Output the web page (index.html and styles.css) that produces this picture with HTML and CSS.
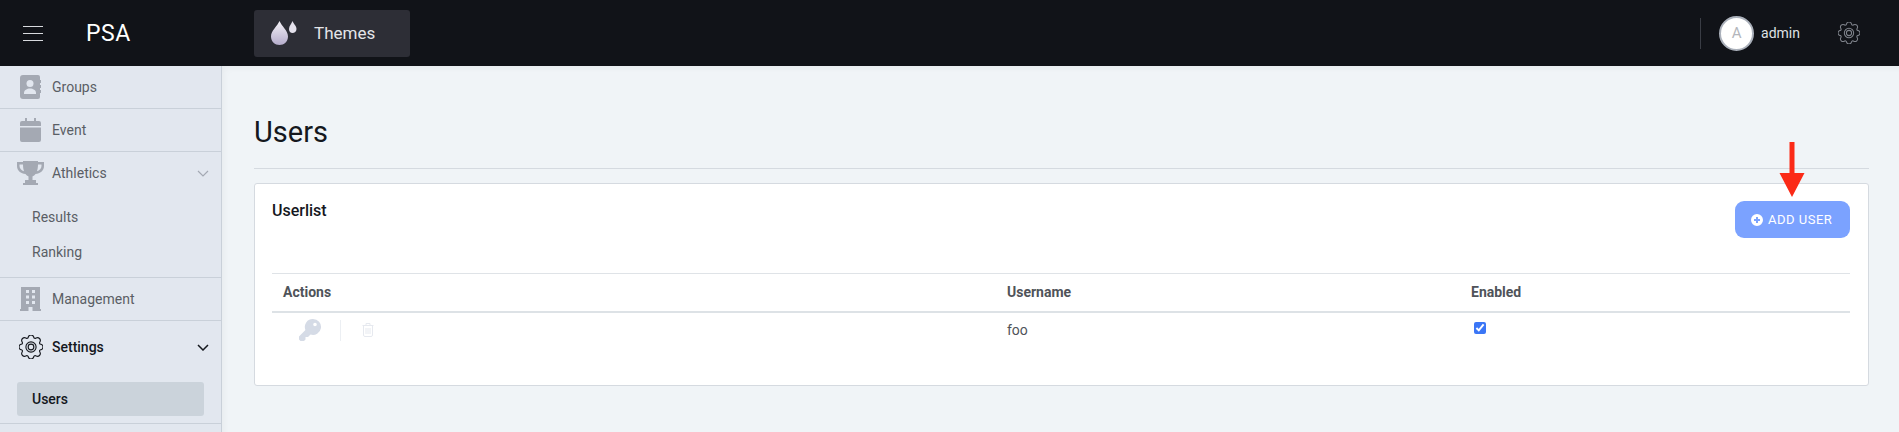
FILE: index.html
```html
<!DOCTYPE html>
<html lang="en">
<head>
    <meta charset="UTF-8">
    <meta name="viewport" content="width=device-width, initial-scale=1.0">
    <title>PSA - Users</title>
    <link rel="stylesheet" href="styles.css">
</head>
<body>

    <svg class="defs" width="0" height="0">
        <symbol id="gear" viewBox="0 0 16 16">
            <path fill="none" stroke="currentColor" stroke-width=".75" d="M9.796 1.343c-.527-1.79-3.065-1.79-3.592 0l-.094.319a.873.873 0 0 1-1.255.52l-.292-.16c-1.64-.892-3.433.902-2.54 2.541l.159.292a.873.873 0 0 1-.52 1.255l-.319.094c-1.79.527-1.79 3.065 0 3.592l.319.094a.873.873 0 0 1 .52 1.255l-.16.292c-.892 1.64.901 3.434 2.541 2.54l.292-.159a.873.873 0 0 1 1.255.52l.094.319c.527 1.79 3.065 1.79 3.592 0l.094-.319a.873.873 0 0 1 1.255-.52l.292.16c1.64.893 3.434-.902 2.54-2.541l-.159-.292a.873.873 0 0 1 .52-1.255l.319-.094c1.79-.527 1.79-3.065 0-3.592l-.319-.094a.873.873 0 0 1-.52-1.255l.16-.292c.893-1.64-.902-3.433-2.541-2.54l-.292.159a.873.873 0 0 1-1.255-.52z"/>
            <circle cx="8" cy="8" r="3.4" fill="none" stroke="currentColor" stroke-width=".75"/>
            <circle cx="8" cy="8" r="1.9" fill="none" stroke="currentColor" stroke-width=".75"/>
        </symbol>
    </svg>

    <header class="topbar">
        <button class="burger" aria-label="Menu"><span></span><span></span><span></span></button>
        <div class="brand">PSA</div>
        <a class="theme-btn">
            <svg class="drops" width="26" height="24" viewBox="0 0 26 24">
                <defs>
                    <linearGradient id="dropfill" x1="0" y1="0" x2="0" y2="1">
                        <stop offset="0" stop-color="#f4f2f7"/>
                        <stop offset="1" stop-color="#b5accb"/>
                    </linearGradient>
                </defs>
                <path fill="url(#dropfill)" d="M8.500 0C6.500 5 0 9.500 0 15.500 0 20.500 4 24 8.500 24S17 20.500 17 15.500C17 9.500 10.500 5 8.500 0Z"/>
                <path fill="#e4e1ec" d="M21.500 0C20.500 3 18 4.800 18 8 18 10.500 19.500 12 21.500 12S25.500 10.500 25.500 8C25.500 4.800 22.500 3 21.500 0Z"/>
            </svg>
            <span>Themes</span>
        </a>
        <div class="user-area">
            <div class="avatar">A</div>
            <span class="user-name">admin</span>
            <svg class="top-gear" width="22" height="22"><use href="#gear"/></svg>
        </div>
    </header>

    <div class="layout">
        <nav class="sidebar">
            <div class="nav-row first">
                <svg class="nav-icon" width="21" height="24" viewBox="0 0 21 24"><path fill="#a4a9b3" d="M3 0H18A2 2 0 0 1 20 2V5H21V8H20V10H21V13H20V15H21V18H20V22A2 2 0 0 1 18 24H3A3 3 0 0 1 0 21V3A3 3 0 0 1 3 0Z"/><circle cx="10" cy="8.500" r="3.500" fill="#e2e7ef"/><path fill="#e2e7ef" d="M4 18C4 15 7 13.500 10 13.500S16 15 16 18V19H4Z"/></svg>
                <span>Groups</span>
            </div>
            <div class="nav-row">
                <svg class="nav-icon" width="21" height="24" viewBox="0 0 21 24"><path fill="#a4a9b3" d="M5 0H7V3H14V0H16V3H19A2 2 0 0 1 21 5V8H0V5A2 2 0 0 1 2 3H5ZM0 9.500H21V22A2 2 0 0 1 19 24H2A2 2 0 0 1 0 22Z"/></svg>
                <span>Event</span>
            </div>
            <div class="nav-group">
                <div class="nav-row">
                    <svg class="nav-icon trophy" width="27" height="24" viewBox="0 0 27 24"><path fill="#a4a9b3" d="M6 0H21V1H27V5C27 10 23 12.500 18.500 13 17.500 14.500 16 15 15.500 15.500V19H19V22H21V24H6V22H8V19H11.500V15.500C11 15 9.500 14.500 8.500 13 4 12.500 0 10 0 5V1H6ZM2.500 3.500V5C2.500 7.500 4.500 9.500 7 10.300 6.400 8.500 6 6 6 3.500ZM24.500 3.500H21C21 6 20.600 8.500 20 10.300 22.500 9.500 24.500 7.500 24.500 5Z"/></svg>
                    <span>Athletics</span>
                    <svg class="chev" width="12" height="7" viewBox="0 0 12 7"><path fill="none" stroke="#a4a9b3" stroke-width="1.200" d="M1 1L6 6L11 1"/></svg>
                </div>
                <div class="nav-subs">
                    <a class="nav-sub">Results</a>
                    <a class="nav-sub">Ranking</a>
                </div>
            </div>
            <div class="nav-row">
                <svg class="nav-icon" width="21" height="24" viewBox="0 0 21 24"><path fill="#a4a9b3" fill-rule="evenodd" d="M1 0H20V22H21V24H12.500V20H8.500V24H0V22H1ZM6 3V6H9V3ZM12 3V6H15V3ZM6 8.500V11.500H9V8.500ZM12 8.500V11.500H15V8.500ZM6 14V17H9V14ZM12 14V17H15V14Z"/></svg>
                <span>Management</span>
            </div>
            <div class="nav-group active">
                <div class="nav-row">
                    <svg class="nav-icon side-gear" width="24" height="24"><use href="#gear"/></svg>
                    <span>Settings</span>
                    <svg class="chev" width="12" height="7" viewBox="0 0 12 7"><path fill="none" stroke="#15181e" stroke-width="1.500" d="M1 1L6 6L11 1"/></svg>
                </div>
                <a class="nav-sub current">Users</a>
            </div>
        </nav>

        <main class="content">
            <h1 class="page-title">Users</h1>
            <section class="card">
                <div class="card-head">
                    <h2>Userlist</h2>
                    <button class="add-btn">
                        <svg width="12" height="12" viewBox="0 0 12 12"><path fill="#fff" fill-rule="evenodd" d="M6 0A6 6 0 1 1 6 12 6 6 0 0 1 6 0ZM5 3V5H3V7H5V9H7V7H9V5H7V3Z"/></svg>
                        ADD USER
                    </button>
                </div>
                <table class="user-table">
                    <thead>
                        <tr>
                            <th class="col-actions">Actions</th>
                            <th class="col-name">Username</th>
                            <th>Enabled</th>
                        </tr>
                    </thead>
                    <tbody>
                        <tr>
                            <td>
                                <div class="row-actions">
                                    <svg width="22" height="22" viewBox="0 0 22 22"><path fill="#d5dbe6" fill-rule="evenodd" d="M14 0A8 8 0 1 1 11.500 15.600L9 18H6.500V20.500L5 22H1.500L0 20.500V17.500L6.400 11A8 8 0 0 1 14 0ZM16 3.700A1.800 1.800 0 1 0 16 7.300 1.800 1.800 0 0 0 16 3.700Z"/></svg>
                                    <span class="action-sep"></span>
                                    <svg width="12" height="14" viewBox="0 0 12 14"><path fill="none" stroke="#e6e9ef" d="M.5 2.500H11.500M4 2.500V.5H8V2.500M1.500 2.500V12A1.500 1.500 0 0 0 3 13.500H9A1.500 1.500 0 0 0 10.500 12V2.500M4 5V11M6 5V11M8 5V11"/></svg>
                                </div>
                            </td>
                            <td>foo</td>
                            <td><input class="enabled-box" type="checkbox" checked></td>
                        </tr>
                    </tbody>
                </table>
            </section>
        </main>
    </div>

    <svg class="red-arrow" width="26" height="56" viewBox="0 0 26 56"><path fill="#fb2a17" d="M10.500 0H15.500V31H25.500L13 55 .5 31H10.500Z"/></svg>

</body>
</html>
```

FILE: styles.css
```css
* {
    box-sizing: border-box;
}
html, body {
    height: 100%;
}
body {
    margin: 0;
    overflow: hidden;
    font-family: Roboto, "Liberation Sans", sans-serif;
    font-size: 14px;
    color: #4f5359;
    background-color: #f0f4f7;
}
.defs {
    position: absolute;
}
.topbar {
    display: flex;
    align-items: center;
    height: 66px;
    background: #111318;
    color: #fff;
    padding-left: 23px;
    padding-right: 39px;
}
.burger {
    display: flex;
    flex-direction: column;
    gap: 6px;
    width: 20px;
    padding: 0;
    background: none;
    border: none;
}
.burger span {
    display: block;
    height: 1px;
    background: #d8dade;
}
.brand {
    width: 168px;
    margin-left: 43px;
    font-size: 23px;
    letter-spacing: .5px;
}
.theme-btn {
    display: flex;
    align-items: center;
    gap: 17px;
    width: 156px;
    height: 47px;
    padding-left: 17px;
    background: #2d2e36;
    border-radius: 3px;
    color: #e4e5e8;
    font-size: 17px;
}
.user-area {
    display: flex;
    align-items: center;
    height: 31px;
    margin-left: auto;
    padding-left: 18px;
    border-left: 1px solid #3a3d45;
}
.avatar {
    display: flex;
    align-items: center;
    justify-content: center;
    width: 35px;
    height: 35px;
    background: #fff;
    border: 2px solid #aab0ba;
    border-radius: 50%;
    color: #b3b6bc;
    font-size: 15px;
}
.user-name {
    margin-left: 7px;
    color: #dfe1e4;
    font-size: 14px;
}
.top-gear {
    margin-left: 38px;
    color: #80848c;
}
.layout {
    display: flex;
    height: calc(100% - 66px);
}
.sidebar {
    flex: none;
    width: 222px;
    overflow: hidden;
    background: #e2e7ef;
    border-right: 1px solid #c9d0d9;
    color: #5a5e65;
}
.nav-row {
    display: flex;
    align-items: center;
    height: 43px;
    padding-left: 20px;
    position: relative;
}
.nav-group .nav-row {
    padding-bottom: 1px;
}
.nav-row span {
    margin-left: 11px;
}
.nav-icon {
    flex: none;
}
.nav-icon.trophy {
    margin-left: -3px;
    margin-right: -3px;
}
.side-gear {
    margin-left: -1px;
    margin-right: -2px;
    color: #15181e;
}
.sidebar > .nav-row,
.nav-group {
    border-bottom: 1px solid #c9d0d9;
}
.chev {
    position: absolute;
    right: 12px;
    top: 18px;
}
.nav-subs {
    display: flex;
    flex-direction: column;
    gap: 1px;
    padding: 5px 0 8px;
}
.nav-sub {
    display: block;
    height: 34px;
    margin-left: 17px;
    width: 187px;
    padding-left: 15px;
    line-height: 34px;
}
.nav-group.active {
    padding-bottom: 7px;
}
.nav-group.active .nav-row {
    height: 61px;
    padding-bottom: 9px;
    color: #15181e;
    font-weight: 500;
}
.nav-group.active .chev {
    top: 23px;
}
.nav-sub.current {
    background: #cbd3db;
    border-radius: 3px;
    color: #15181e;
    font-weight: 500;
}
.content {
    flex: 1;
    padding: 0 30px 0 32px;
    box-shadow: inset 6px 6px 8px -6px rgba(0, 0, 0, .06);
}
.page-title {
    margin: 0 0 14px;
    padding: 46px 0 16px;
    border-bottom: 1px solid #d5dae0;
    font-size: 29px;
    line-height: 40px;
    font-weight: 400;
    color: #15181e;
}
.card {
    height: 203px;
    padding: 17px 18px 0 17px;
    background: #fff;
    border: 1px solid #d5dae0;
    border-radius: 3px;
}
.card-head {
    display: flex;
    justify-content: space-between;
    height: 72px;
}
.card-head h2 {
    margin: 0;
    font-size: 16px;
    line-height: 20px;
    font-weight: 500;
    color: #15181e;
}
.add-btn {
    display: flex;
    align-items: center;
    gap: 5px;
    width: 115px;
    height: 37px;
    padding: 0 0 0 16px;
    background: #7ba2ff;
    border: none;
    border-radius: 9px;
    color: #fff;
    font-family: inherit;
    font-size: 13px;
    letter-spacing: .5px;
}
.user-table {
    width: 100%;
    table-layout: fixed;
    border-collapse: collapse;
    border-top: 1px solid #dfe3e7;
}
.user-table th {
    height: 38px;
    padding: 0 11px;
    text-align: left;
    font-weight: 700;
    border-bottom: 2px solid #dde2e6;
}
.user-table td {
    padding: 0 11px;
    height: 36px;
    font-size: 14px;
}
.col-actions {
    width: 724px;
}
.col-name {
    width: 464px;
}
.row-actions {
    display: flex;
    align-items: center;
    gap: 19px;
    padding-left: 16px;
}
.action-sep {
    width: 1px;
    height: 21px;
    margin-right: 2px;
    background: #eceff3;
}
.enabled-box {
    display: block;
    width: 12px;
    height: 12px;
    margin: 0 0 4px 3px;
    accent-color: #3b76f6;
}
.red-arrow {
    position: absolute;
    left: 1779px;
    top: 142px;
}
```
